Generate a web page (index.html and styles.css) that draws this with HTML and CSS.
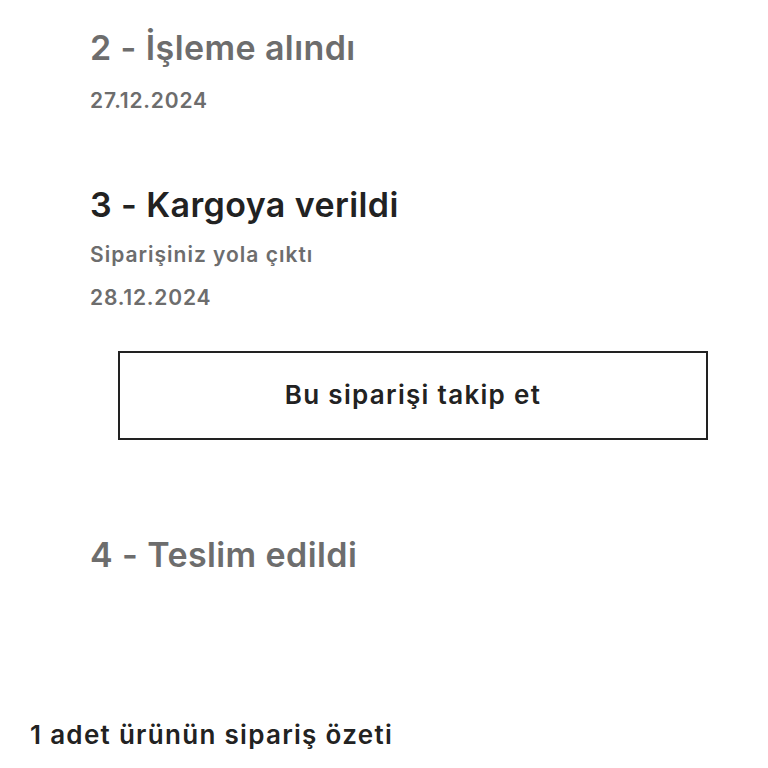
FILE: index.html
```html
<!DOCTYPE html>
<html lang="tr">
  <head>
    <meta charset="UTF-8" />
    <meta name="viewport" content="width=device-width, initial-scale=1.0" />
    <title>Sipariş durumu</title>
    <link rel="stylesheet" href="styles.css">
  </head>
  <body>
    <main>
      <!-- Sipariş adımları -->
      <ol class="adimlar">
        <li class="adim">
          <h2>2 - İşleme alındı</h2>
          <p class="tarih">27.12.2024</p>
        </li>
        <li class="adim aktif">
          <h2>3 - Kargoya verildi</h2>
          <p class="aciklama">Siparişiniz yola çıktı</p>
          <p class="tarih">28.12.2024</p>
          <button class="takip">Bu siparişi takip et</button>
        </li>
        <li class="adim son">
          <h2>4 - Teslim edildi</h2>
        </li>
      </ol>

      <h3 class="ozet">1 adet ürünün sipariş özeti</h3>
    </main>
  </body>
</html>
```

FILE: styles.css
```css
:root {
  --gri: #6d6d6d;
  --koyu: #222222;
}

* {
  margin: 0;
  padding: 0;
  box-sizing: border-box;
}

body {
  font-family: Inter, Lato, sans-serif;
  background-color: #ffffff;
  color: var(--koyu);
  width: 768px;
  height: 768px;
  overflow: hidden;
}

main {
  padding-top: 28px;
}

.adimlar {
  list-style: none;
  padding-left: 90px;
  display: flex;
  flex-direction: column;
}

.adim h2 {
  font-size: 34px;
  line-height: 40px;
  font-weight: 600;
  letter-spacing: 0.4px;
  color: var(--gri);
}

.adim.aktif {
  margin-top: 71px;
}

.adim.aktif h2 {
  color: var(--koyu);
}

.adim.son {
  margin-top: 95px;
}

.tarih {
  font-size: 21px;
  line-height: 26px;
  font-weight: 600;
  letter-spacing: 0.8px;
  color: var(--gri);
  margin-top: 20px;
}

.aciklama {
  font-size: 21px;
  line-height: 24px;
  font-weight: 600;
  letter-spacing: 1px;
  color: var(--gri);
  margin-top: 18px;
}

.aciklama + .tarih {
  margin-top: 18px;
}

.takip {
  display: flex;
  align-items: center;
  justify-content: center;
  width: 590px;
  height: 89px;
  margin-top: 40px;
  margin-left: 28px;
  padding-bottom: 3px;
  background: #ffffff;
  border: 2px solid var(--koyu);
  font-family: inherit;
  font-size: 26px;
  font-weight: 600;
  letter-spacing: 1.3px;
  color: var(--koyu);
  cursor: pointer;
}

.ozet {
  margin-top: 145px;
  padding-left: 30px;
  font-size: 26px;
  line-height: 30px;
  font-weight: 600;
  letter-spacing: 1.3px;
  color: var(--koyu);
}
```
